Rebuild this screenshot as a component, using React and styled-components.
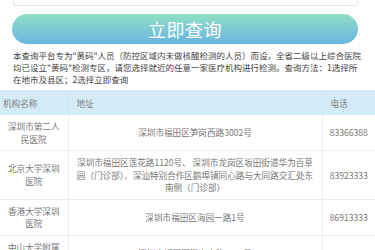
import React from 'react';
import styled, { createGlobalStyle } from 'styled-components';

const GlobalStyle = createGlobalStyle`
    html, body {
        margin: 0;
        padding: 0;
        background: #fff;
        font-family: "Noto Sans CJK SC", "Noto Sans", sans-serif;
        color: #333;
    }
`;

const hospitals = [
    {
        name: '深圳市第二人民医院',
        address: '深圳市福田区笋岗西路3002号',
        phone: '83366388'
    },
    {
        name: '北京大学深圳医院',
        address:
            '深圳市福田区莲花路1120号、 深圳市龙岗区坂田街道华为百草园（门诊部）、深汕特别合作区鹅埠镇同心路与大同路交汇处东南侧（门诊部）',
        phone: '83923333'
    },
    {
        name: '香港大学深圳医院',
        address: '深圳市福田区海园一路1号',
        phone: '86913333'
    },
    {
        name: '中山大学附属第八医院',
        address: '深圳市福田区深南中路3025号',
        phone: '83982222'
    }
];

function App() {
    return (
        <Page>
            <GlobalStyle />
            <SearchForm>
                <AreaInput>福田区</AreaInput>
                <QueryButton>立即查询</QueryButton>
            </SearchForm>
            <Notice>
                本查询平台专为"黄码"人员（防控区域内未做核酸检测的人员）而设，全省二级以上综合医院均已设立"黄码"检测专区，请您选择就近的任意一家医疗机构进行检测。查询方法：1选择所在地市及县区；2选择立即查询
            </Notice>
            <Table>
                <colgroup>
                    <col style={{ width: 68 }} />
                    <col />
                    <col style={{ width: 53 }} />
                </colgroup>
                <thead>
                    <tr>
                        <HeadCell $first>机构名称</HeadCell>
                        <HeadCell>地址</HeadCell>
                        <HeadCell>电话</HeadCell>
                    </tr>
                </thead>
                <tbody>
                    {hospitals.map((h) => (
                        <tr key={h.name}>
                            <Cell>{h.name}</Cell>
                            <Cell $wide>{h.address}</Cell>
                            <Cell>{h.phone}</Cell>
                        </tr>
                    ))}
                </tbody>
            </Table>
        </Page>
    );
}

const Page = styled.div`
    width: 375px;
    height: 250px;
    overflow: hidden;
`;

const SearchForm = styled.div`
    display: flex;
    flex-direction: column;
    gap: 8px;
    padding: 0 17px 0 12px;
    margin-top: -23px;
`;

const AreaInput = styled.div`
    height: 29px;
    box-sizing: border-box;
    border: 1px solid #e6e6e6;
    border-radius: 2px;
    background: #fff;
    padding: 4px 7px 0;
    margin-left: 1px;
    font-size: 11px;
    line-height: 22px;
    color: #333;
`;

const QueryButton = styled.div`
    height: 30px;
    border-radius: 15px;
    background: linear-gradient(to bottom, #8fdfc4, #6ab4e2);
    color: #fff;
    font-size: 18px;
    line-height: 30px;
    text-align: center;
    letter-spacing: 0.5px;
`;

const Notice = styled.p`
    margin: 5px 0 0;
    padding: 0 13px;
    font-size: 8.5px;
    line-height: 12px;
    color: #444;
`;

const Table = styled.table`
    width: 375px;
    margin-top: 5px;
    border-collapse: collapse;
    table-layout: fixed;
    font-size: 8.6px;
    color: #777;
`;

const HeadCell = styled.th`
    height: 25px;
    padding: 0 0 0 ${(p) => (p.$first ? '3px' : '8px')};
    background: #d5ebf8;
    font-weight: normal;
    text-align: left;
    color: #808080;
    border-left: 1px solid #d0e6f3;
    &:first-child {
        border-left: none;
    }
`;

const Cell = styled.td`
    padding: 5px ${(p) => (p.$wide ? '8px' : '5px')};
    line-height: 12.5px;
    text-align: center;
    vertical-align: middle;
    border-bottom: 1px solid #ececec;
    border-left: 1px solid #ececec;
    &:first-child {
        border-left: none;
    }
`;

export default App;
